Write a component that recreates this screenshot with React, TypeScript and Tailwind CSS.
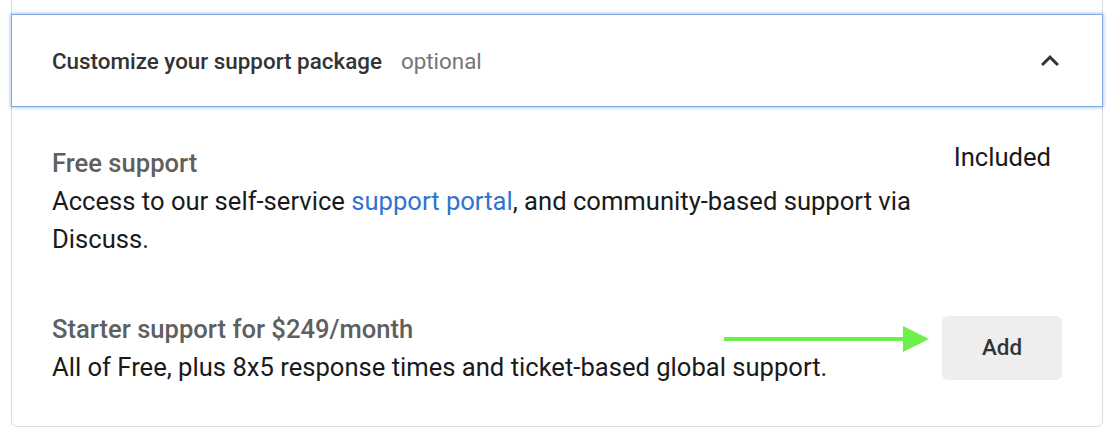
import React from "react";

export default function App() {
  return (
    <div className="w-[1120px] h-[448px] overflow-hidden bg-white" style={{ fontFamily: "Roboto, 'Liberation Sans', sans-serif" }}>
      <div className="ml-[11px] w-[1092px] mt-[-20px] border border-[#dcdcdc] rounded-[6px] pt-[33px]">
        <div className="-mx-px flex items-center justify-between h-[93px] border border-[#7fa8e2] bg-white shadow-[0_0_3px_1px_rgba(90,140,220,0.45)] pl-[40px] pr-[34px]">
          <div className="flex items-baseline pt-[2px]">
            <span className="text-[22.4px] font-medium text-[#333333]">Customize your support package</span>
            <span className="ml-[19px] text-[22.4px] text-[#757575]">optional</span>
          </div>
          <svg width="36" height="36" viewBox="0 0 24 24">
            <path d="M12 8l-6 6 1.41 1.41L12 10.83l4.59 4.58L18 14z" fill="#333" />
          </svg>
        </div>
        <div className="pl-[40px] pr-[40px] pt-[37px] pb-[40px]">
          <div className="flex justify-between">
            <div className="w-[870px]">
              <div className="text-[25.6px] leading-[38px] font-medium text-[#5f5f5f]">Free support</div>
              <div className="text-[25.6px] leading-[38px] text-[#1a1a1a]">
                Access to our self-service <span className="text-[#2f74d0]">support portal</span>, and community-based support via Discuss.
              </div>
            </div>
            <div className="text-[25.6px] leading-[38px] text-[#1a1a1a] mr-[11px] mt-[-6px]">Included</div>
          </div>
          <div className="flex justify-between items-center mt-[52px]">
            <div className="flex-1 min-w-0 whitespace-nowrap">
              <div className="text-[25.6px] leading-[38px] font-medium text-[#5f5f5f]">Starter support for $249/month</div>
              <div className="text-[25.6px] leading-[38px] text-[#1a1a1a]">All of Free, plus 8x5 response times and ticket-based global support.</div>
            </div>
            <div className="relative shrink-0">
              <svg width="206" height="28" viewBox="0 0 206 28" className="absolute right-[132px] top-[9px]">
                <line x1="0" y1="14" x2="182" y2="14" stroke="#6ef04a" strokeWidth="4" />
                <polygon points="179,1 205,14 179,27" fill="#6ef04a" />
              </svg>
              <button className="block w-[120px] h-[64px] rounded-[6px] bg-[#eeeeee] text-[22.4px] font-medium text-[#333333]">Add</button>
            </div>
          </div>
        </div>
      </div>
    </div>
  );
}
